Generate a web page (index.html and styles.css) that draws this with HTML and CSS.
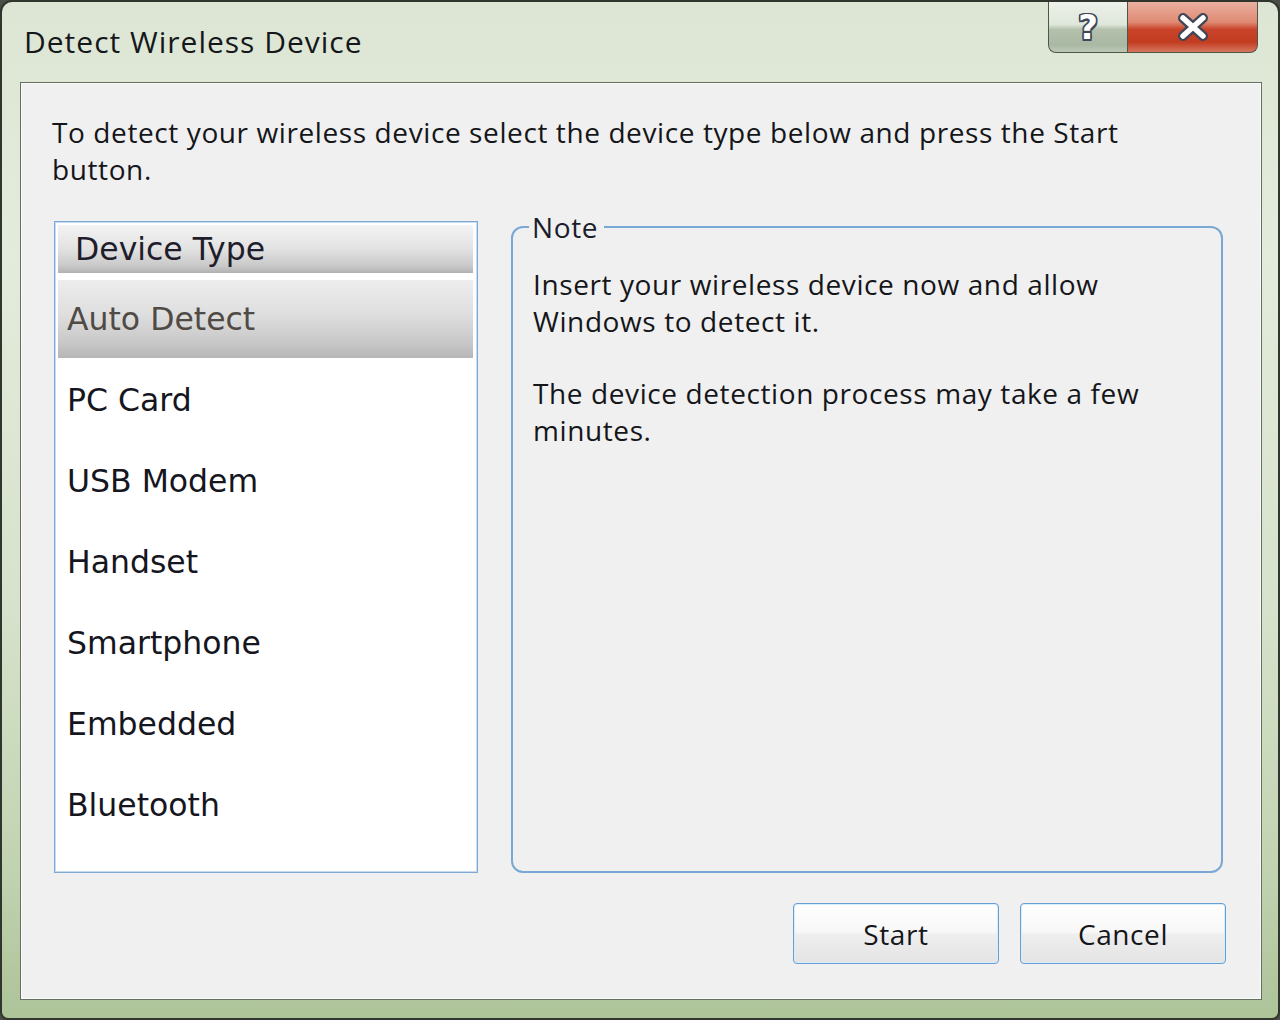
FILE: index.html
```html
<!DOCTYPE html>
<html lang="en">
<head>
    <meta charset="UTF-8">
    <title>Detect Wireless Device</title>
    <link rel="stylesheet" href="styles.css">
</head>
<body>
    <div class="window">
        <div class="titlebar">
            <span class="title">Detect Wireless Device</span>
            <div class="caption-buttons">
                <div class="cap cap-help">?</div>
                <div class="cap cap-close">
                    <svg width="34" height="28" viewBox="0 0 34 28">
                        <path d="M7 5 L27 23 M27 5 L7 23" stroke="#3f4657" stroke-width="10" stroke-linecap="round" fill="none"/>
                        <path d="M7 5 L27 23 M27 5 L7 23" stroke="#ffffff" stroke-width="5.5" stroke-linecap="round" fill="none"/>
                    </svg>
                </div>
            </div>
        </div>

        <div class="client">
            <p class="intro">To detect your wireless device select the device type below and press the Start<br>button.</p>

            <div class="main">
                <div class="listbox">
                    <div class="list-header">Device Type</div>
                    <ul class="device-list">
                        <li class="selected">Auto Detect</li>
                        <li>PC Card</li>
                        <li>USB Modem</li>
                        <li>Handset</li>
                        <li>Smartphone</li>
                        <li>Embedded</li>
                        <li>Bluetooth</li>
                    </ul>
                </div>

                <fieldset class="note">
                    <legend>Note</legend>
                    <p>Insert your wireless device now and allow<br>Windows to detect it.</p>
                    <p>The device detection process may take a few<br>minutes.</p>
                </fieldset>
            </div>

            <div class="actions">
                <button class="btn">Start</button>
                <button class="btn">Cancel</button>
            </div>
        </div>
    </div>
</body>
</html>
```

FILE: styles.css
```css
body {
    margin: 0;
    padding: 0;
    background: #4a4d48;
    font-family: "Open Sans", "Noto Sans", sans-serif;
    color: #15161a;
}

.window {
    box-sizing: border-box;
    width: 1280px;
    height: 1020px;
    border: 2px solid #30362d;
    border-radius: 12px 12px 8px 8px;
    padding: 0 16px 18px 18px;
    display: flex;
    flex-direction: column;
    background: linear-gradient(to bottom, #dde6d4 0%, #e3ebdc 25%, #d6e2cb 60%, #c2d3b1 85%, #adc398 100%);
}

.titlebar {
    flex: none;
    height: 80px;
    display: flex;
    justify-content: space-between;
    align-items: flex-start;
}

.title {
    margin: 22px 0 0 4px;
    font-size: 30px;
    line-height: 36px;
    letter-spacing: 1px;
    color: #15171a;
}

.caption-buttons {
    display: flex;
    margin-right: 4px;
}

.cap {
    box-sizing: border-box;
    height: 51px;
    border: 1px solid #4d5749;
    border-top: none;
    display: flex;
    align-items: center;
    justify-content: center;
}

.cap-help {
    width: 79px;
    border-right: none;
    border-radius: 0 0 0 8px;
    background: linear-gradient(to bottom, #eef2ea 0%, #dfe6da 45%, #b4c1ad 55%, #a9b8a2 85%, #bcc8b5 100%);
    font-family: "DejaVu Sans", sans-serif;
    font-weight: bold;
    font-size: 34px;
    color: #ffffff;
    text-shadow: 1.5px 0 0 #3f4657, -1.5px 0 0 #3f4657, 0 1.5px 0 #3f4657, 0 -1.5px 0 #3f4657,
        1.5px 1.5px 0 #3f4657, -1.5px -1.5px 0 #3f4657, 1.5px -1.5px 0 #3f4657, -1.5px 1.5px 0 #3f4657;
}

.cap-close {
    width: 131px;
    border-radius: 0 0 8px 0;
    background: linear-gradient(to bottom, #eab0a0 0%, #e08b74 40%, #c8432a 55%, #c23c20 80%, #d6765e 100%);
}

.client {
    flex: 1;
    box-sizing: border-box;
    border: 1px solid #656f60;
    box-shadow: inset 0 0 0 1px #fbfbfb;
    background: #f0f0f0;
    padding: 31px 35px 0 33px;
}

.intro {
    margin: 0 0 0 -2px;
    font-size: 28px;
    line-height: 37px;
    letter-spacing: 0.6px;
}

.main {
    display: flex;
    align-items: flex-start;
    gap: 33px;
    height: 652px;
    margin-top: 33px;
}

.listbox {
    box-sizing: border-box;
    width: 424px;
    height: 652px;
    border: 1px solid #7fa8d2;
    box-shadow: inset 0 0 0 1px #c8dcf0;
    background: #ffffff;
    padding: 3px 4px 0 3px;
    font-family: "DejaVu Sans", sans-serif;
    font-size: 31.5px;
}

.list-header {
    height: 48px;
    line-height: 48px;
    padding-left: 17px;
    color: #1f1d2c;
    background: linear-gradient(to bottom, #f3f3f3 0%, #e2e2e2 50%, #c9c9c9 85%, #b1b1b1 100%);
}

.device-list {
    list-style: none;
    margin: 7px 0 0 0;
    padding: 0;
}

.device-list li {
    height: 81px;
    line-height: 81px;
    padding-left: 9px;
    color: #15161e;
}

.device-list li.selected {
    height: 78px;
    line-height: 78px;
    margin-bottom: 2px;
    color: #504a44;
    background: linear-gradient(to bottom, #ededed 0%, #dedede 45%, #c8c8c8 80%, #b6b6b6 100%);
}

.note {
    box-sizing: border-box;
    width: 712px;
    height: 662px;
    min-width: 0;
    margin: -10px 0 0 0;
    border: 2px solid #7aa8d4;
    border-radius: 12px;
    padding: 23px 20px 0 20px;
}

.note legend {
    font-size: 28px;
    line-height: 32px;
    letter-spacing: 0.6px;
    padding: 0 6px 0 3px;
    margin-left: -4px;
    color: #1b1d2a;
}

.note p {
    margin: 0 0 35px 0;
    font-size: 28px;
    line-height: 37px;
    letter-spacing: 0.6px;
}

.actions {
    display: flex;
    justify-content: flex-end;
    gap: 21px;
    margin-top: 30px;
}

.btn {
    box-sizing: border-box;
    width: 206px;
    height: 61px;
    border: 1px solid #6a9dd2;
    border-radius: 4px;
    box-shadow: inset 0 0 0 1px #d7eefb;
    background: linear-gradient(to bottom, #ffffff 0%, #f7f7f7 48%, #eeeeee 52%, #e4e4e4 100%);
    font-family: "Open Sans", "Noto Sans", sans-serif;
    font-size: 28px;
    letter-spacing: 0.6px;
    color: #15161a;
    padding: 0;
}
```
